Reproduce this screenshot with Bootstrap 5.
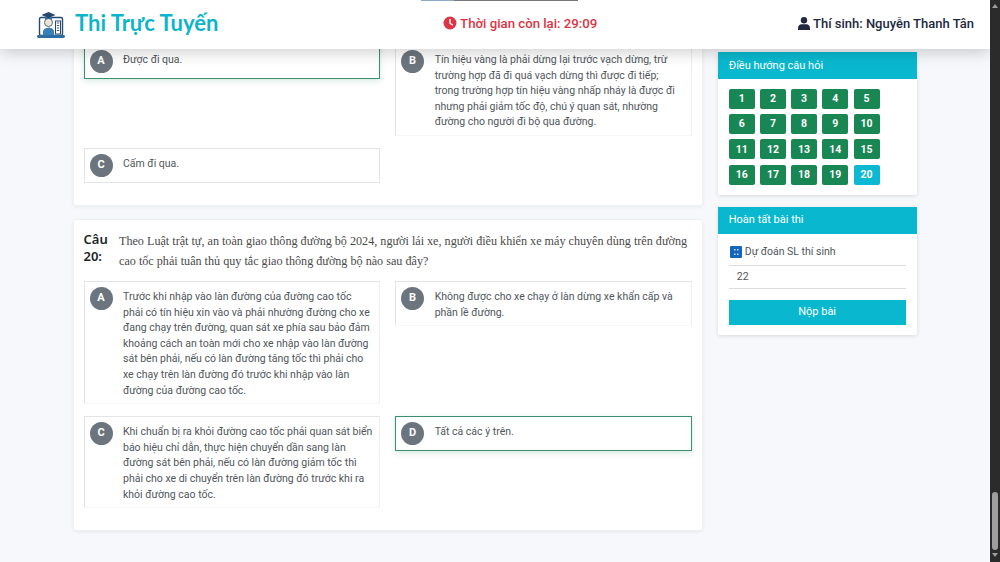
<!DOCTYPE html>
<html lang="vi">
<head>
  <meta charset="UTF-8" />
  <title>Thi Trực Tuyến</title>
  <link href="https://cdn.jsdelivr.net/npm/bootstrap@5.3.3/dist/css/bootstrap.min.css" rel="stylesheet" />
  <style>
    html, body { height: 100%; overflow: hidden; }
    body { background: #f6f8fb; font-family: Roboto, "Noto Sans", sans-serif; font-size: 10.5px; color: #50565c; }

    .exam-frame { height: 562px; }
    .exam-scroll { width: 990px; position: relative; overflow: hidden; }

    .top-bar { position: absolute; top: 0; left: 0; right: 0; height: 49px; background: #fff; z-index: 10; padding: 0 16px 0 36px; box-shadow: 0 4px 14px rgba(0, 0, 0, .18); }
    .top-progress { position: absolute; top: 0; left: 421px; width: 157px; height: 1px; background: #777; }
    .top-progress span { display: block; height: 1px; background: #8fa9c9; }
    .brand-title { font-family: Lato, sans-serif; font-weight: 700; font-size: 22px; color: #0cb5cb; line-height: 1; margin: -4px 0 0 1px; }
    .timer-text { font-size: 13.200px; font-weight: 500; color: #dc3545; margin-left: 24px; margin-top: -2px; gap: 3px; }
    .student-text { font-size: 13px; font-weight: 500; color: #22283f; margin-top: -2px; gap: 3px; }

    .exam-row { width: 859px; --bs-gutter-x: 16px; margin: 0 auto; }
    .exam-col { padding-top: 20px; }
    .side-col { padding-top: 52px; }

    .box-card { background: #fff; border: 0; box-shadow: 0 0 0 1px #eef0f3, 0 1px 4px rgba(0, 0, 0, .1); border-radius: 2px; padding: 11px 10px 10px; margin-bottom: 15px; }
    .first-card { height: 185px; padding-top: 24px; }

    .question-head { height: 40px; margin-bottom: 10px; }
    .question-no { width: 35.500px; flex: none; font-family: "Noto Sans", sans-serif; font-weight: 600; font-size: 13px; line-height: 17px; color: #212529; }
    .question-text { font-family: "Liberation Serif", serif; font-size: 12.150px; line-height: 20px; color: #4a4a4a; }

    .option-row { --bs-gutter-x: 15px; --bs-gutter-y: 0; }
    .option-box { background: #fff; border: 1px solid #e2e4e7; padding: 5px 6.500px 5px 5px; margin-bottom: 12px; min-height: 34px; gap: 10.500px; }
    .option-box.is-open { border-bottom-color: #f7f7f7; border-right-color: #eeeeee; }
    .option-box.is-picked { border-color: #3a9170; box-shadow: 0 2px 6px rgba(25, 135, 84, .18); }
    .option-letter { width: 23px; height: 23px; flex: none; border-radius: 50%; background: #6c757d; color: #fff; font-size: 11px; font-weight: 700; }
    .option-text { margin-top: 2px; line-height: 15.6px; }

    .side-card { background: #fff; box-shadow: 0 1px 4px rgba(0, 0, 0, .12); border-radius: 2px; margin-bottom: 12px; }
    .side-head { height: 27px; background: #09b8ce; color: #fff; font-size: 11px; padding: 1px 11px 0; }
    .nav-grid { padding: 10px 11px 10px; display: grid; grid-template-columns: repeat(5, 26px); column-gap: 5.2px; row-gap: 5.2px; }
    .nav-num { width: 26px; height: 20px; padding: 0; border: 0; border-radius: 2px; font-size: 10.5px; font-weight: 700; color: #fff; background: #198754; }
    .nav-num.is-now { background: #0db8d3; }
    .finish-body { padding: 7px 11px 10px; }
    .predict-label { height: 22px; margin-bottom: 2px; gap: 3px; font-size: 10.5px; padding-left: 1px; }
    .predict-input { height: 24px; padding: 0 8px; border-radius: 0; border: 0; border-top: 1px solid #ddd; border-bottom: 1px solid #ddd; font-size: 10.5px; color: #555; }
    .submit-btn { margin-top: 11px; height: 25px; padding: 0; border: 0; border-radius: 0; background: #09b8ce; color: #fff; font-size: 11px; }

    .fake-scroll { width: 10px; background: #2b2b2b; position: relative; }
    .fake-thumb { position: absolute; left: 2px; width: 6px; top: 492px; height: 58px; border-radius: 3px; background: #9e9e9e; }
    .fake-arrow { position: absolute; left: 2px; width: 0; height: 0; border-left: 3px solid transparent; border-right: 3px solid transparent; }
    .fake-up { top: 4px; border-bottom: 4px solid #9e9e9e; }
    .fake-down { top: 553px; border-top: 4px solid #9e9e9e; }
  </style>
</head>
<body>

  <div class="exam-frame d-flex">
    <div class="exam-scroll">

      <!-- Header -->
      <header class="top-bar d-flex align-items-center justify-content-between">
        <div class="top-progress"><span style="width: 21%"></span></div>
        <div class="d-flex align-items-center gap-2">
          <svg width="30" height="30" viewBox="0 0 30 30">
            <rect x="3.500" y="7.500" width="23" height="18" rx="1.500" fill="#fff" stroke="#27496d" stroke-width="1.400"/>
            <rect x="1" y="25" width="28" height="3" rx="1.400" fill="#2f6ea5"/>
            <path d="M7 25v-3.500c0-2.500 3-3.600 6-4 2.500.4 5 1.500 5 4V25z" fill="#3b7fb8"/>
            <circle cx="12.500" cy="12.500" r="4" fill="#f3e3d6" stroke="#27496d" stroke-width=".8"/>
            <path d="M12.500 2l7 3-7 3-7-3z" fill="#27496d"/>
            <path d="M9 6.500v2.500h7V6.500l-3.500 1.500z" fill="#2f6ea5"/>
            <rect x="19.500" y="11" width="5" height="13" fill="#fff" stroke="#27496d" stroke-width="1"/>
            <path d="M20.800 13h2.400M20.800 15.500h2.400M20.800 18h2.400M20.800 20.500h2.400" stroke="#27496d" stroke-width=".9"/>
          </svg>
          <span class="brand-title">Thi Trực Tuyến</span>
        </div>
        <div class="timer-text d-flex align-items-center">
          <svg width="14" height="14" viewBox="0 0 14 14"><circle cx="7" cy="7" r="6.500" fill="#dc3545"/><path d="M7 3v4.200l2.800 2" fill="none" stroke="#fff" stroke-width="1.400"/></svg>
          <span>Thời gian còn lại: 29:09</span>
        </div>
        <div class="student-text d-flex align-items-center">
          <svg width="12" height="13" viewBox="0 0 12 13"><circle cx="6" cy="3.300" r="3.200" fill="#22283f"/><path d="M0 13v-1.800C0 8.800 1.800 7.300 3.500 7.300h5c1.700 0 3.500 1.500 3.500 3.900V13z" fill="#22283f"/></svg>
          <span>Thí sinh: Nguyễn Thanh Tân</span>
        </div>
      </header>

      <div class="row exam-row">
        <!-- Questions -->
        <div class="col-9 exam-col">
          <div class="box-card first-card">
            <div class="row option-row align-items-start">
              <div class="col-6">
                <div class="option-box is-picked d-flex">
                  <span class="option-letter d-flex align-items-center justify-content-center">A</span>
                  <div class="option-text">Được đi qua.</div>
                </div>
              </div>
              <div class="col-6">
                <div class="option-box is-open d-flex">
                  <span class="option-letter d-flex align-items-center justify-content-center">B</span>
                  <div class="option-text">Tín hiệu vàng là phải dừng lại trước vạch dừng, trừ trường hợp đã đi quá vạch dừng thì được đi tiếp; trong trường hợp tín hiệu vàng nhấp nháy là được đi nhưng phải giảm tốc độ, chú ý quan sát, nhường đường cho người đi bộ qua đường.</div>
                </div>
              </div>
              <div class="col-6">
                <div class="option-box d-flex">
                  <span class="option-letter d-flex align-items-center justify-content-center">C</span>
                  <div class="option-text">Cấm đi qua.</div>
                </div>
              </div>
            </div>
          </div>

          <div class="box-card">
            <div class="question-head d-flex">
              <div class="question-no">Câu 20:</div>
              <div class="question-text">Theo Luật trật tự, an toàn giao thông đường bộ 2024, người lái xe, người điều khiển xe máy chuyên dùng trên đường cao tốc phải tuân thủ quy tắc giao thông đường bộ nào sau đây?</div>
            </div>
            <div class="row option-row align-items-start">
              <div class="col-6">
                <div class="option-box is-open d-flex">
                  <span class="option-letter d-flex align-items-center justify-content-center">A</span>
                  <div class="option-text">Trước khi nhập vào làn đường của đường cao tốc phải có tín hiệu xin vào và phải nhường đường cho xe đang chạy trên đường, quan sát xe phía sau bảo đảm khoảng cách an toàn mới cho xe nhập vào làn đường sát bên phải, nếu có làn đường tăng tốc thì phải cho xe chạy trên làn đường đó trước khi nhập vào làn đường của đường cao tốc.</div>
                </div>
              </div>
              <div class="col-6">
                <div class="option-box is-open d-flex">
                  <span class="option-letter d-flex align-items-center justify-content-center">B</span>
                  <div class="option-text">Không được cho xe chạy ở làn dừng xe khẩn cấp và phần lề đường.</div>
                </div>
              </div>
              <div class="col-6">
                <div class="option-box is-open d-flex">
                  <span class="option-letter d-flex align-items-center justify-content-center">C</span>
                  <div class="option-text">Khi chuẩn bị ra khỏi đường cao tốc phải quan sát biển báo hiệu chỉ dẫn, thực hiện chuyển dần sang làn đường sát bên phải, nếu có làn đường giảm tốc thì phải cho xe di chuyển trên làn đường đó trước khi ra khỏi đường cao tốc.</div>
                </div>
              </div>
              <div class="col-6">
                <div class="option-box is-picked d-flex">
                  <span class="option-letter d-flex align-items-center justify-content-center">D</span>
                  <div class="option-text">Tất cả các ý trên.</div>
                </div>
              </div>
            </div>
          </div>
        </div>

        <!-- Sidebar -->
        <div class="col-3 side-col">
          <div class="side-card">
            <div class="side-head d-flex align-items-center">Điều hướng câu hỏi</div>
            <div class="nav-grid">
              <button class="btn nav-num">1</button>
              <button class="btn nav-num">2</button>
              <button class="btn nav-num">3</button>
              <button class="btn nav-num">4</button>
              <button class="btn nav-num">5</button>
              <button class="btn nav-num">6</button>
              <button class="btn nav-num">7</button>
              <button class="btn nav-num">8</button>
              <button class="btn nav-num">9</button>
              <button class="btn nav-num">10</button>
              <button class="btn nav-num">11</button>
              <button class="btn nav-num">12</button>
              <button class="btn nav-num">13</button>
              <button class="btn nav-num">14</button>
              <button class="btn nav-num">15</button>
              <button class="btn nav-num">16</button>
              <button class="btn nav-num">17</button>
              <button class="btn nav-num">18</button>
              <button class="btn nav-num">19</button>
              <button class="btn nav-num is-now">20</button>
            </div>
          </div>

          <div class="side-card">
            <div class="side-head d-flex align-items-center">Hoàn tất bài thi</div>
            <div class="finish-body d-flex flex-column">
              <div class="predict-label d-flex align-items-center">
                <svg width="12" height="12" viewBox="0 0 12 12"><rect width="12" height="12" rx="1" fill="#1565c0"/><path d="M4 3h1.500v1.500H4zM7 3h1.500v1.500H7zM4 7.500h1.500V9H4zM7 7.500h1.500V9H7z" fill="#cfe3f7"/></svg>
                <span>Dự đoán SL thí sinh</span>
              </div>
              <input class="form-control predict-input" type="text" value="22" />
              <button class="btn submit-btn">Nộp bài</button>
            </div>
          </div>
        </div>
      </div>
    </div>

    <!-- Scrollbar -->
    <div class="fake-scroll">
      <span class="fake-arrow fake-up"></span>
      <span class="fake-thumb"></span>
      <span class="fake-arrow fake-down"></span>
    </div>
  </div>

  <script src="https://cdn.jsdelivr.net/npm/bootstrap@5.3.3/dist/js/bootstrap.bundle.min.js"></script>
</body>
</html>
